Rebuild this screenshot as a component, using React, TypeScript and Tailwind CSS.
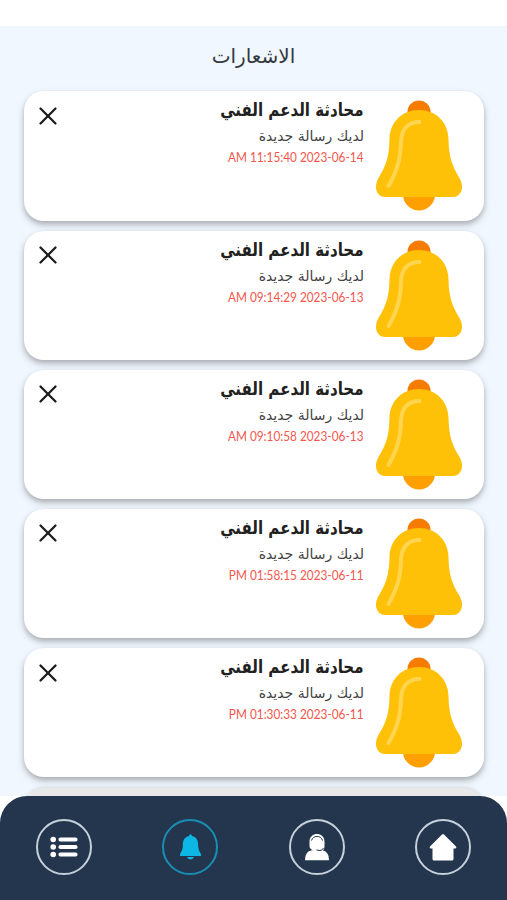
import React from 'react';
import { X } from 'lucide-react';

interface Notification {
  id: number;
  title: string;
  message: string;
  date: string;
}

const title = 'محادثة الدعم الفني';
const message = 'لديك رسالة جديدة';

const notifications: Notification[] = [
  { id: 1, title, message, date: 'AM 11:15:40 2023-06-14' },
  { id: 2, title, message, date: 'AM 09:14:29 2023-06-13' },
  { id: 3, title, message, date: 'AM 09:10:58 2023-06-13' },
  { id: 4, title, message, date: 'PM 01:58:15 2023-06-11' },
  { id: 5, title, message, date: 'PM 01:30:33 2023-06-11' },
];

function BigBell() {
  return (
    <svg width="88" height="111" viewBox="0 0 88 111" className="shrink-0">
      <circle cx="44" cy="12" r="11.5" fill="#f57c00" />
      <circle cx="44" cy="94.5" r="16" fill="#ffa000" />
      <path
        d="M44 10C27 10 15 22 14.5 39C14.3 56 11 66 3.500 78C-2 87.500 2 97 10 97H78C86 97 90 87.500 84.500 78C77 66 73.700 56 73.500 39C73 22 61 10 44 10Z"
        fill="#ffc107"
      />
      <path
        d="M44.500 22C33 22 26.500 29 26 42C25.500 60 22 71 13.500 86"
        fill="none"
        stroke="#ffd54f"
        strokeWidth="4"
        strokeLinecap="round"
      />
    </svg>
  );
}

function NotificationCard({ item }: { item: Notification }) {
  return (
    <div className="flex h-[129.3px] shrink-0 rounded-[20px] bg-white pr-[21px] pl-[16px] shadow-[0_3px_5px_rgba(0,0,0,0.2),0_4px_10px_rgba(0,0,0,0.13)]">
      <div className="pt-[9px]">
        <BigBell />
      </div>
      <div className="flex flex-1 flex-col items-start pr-[11px] pt-[5px]">
        <h2 className="h-[29px] origin-right scale-x-[0.836] whitespace-nowrap text-[18px] font-bold leading-[28px] text-[#212121]">
          {item.title}
        </h2>
        <p className="h-[23px] whitespace-nowrap text-[14px] leading-[23px] text-[#424242]">{item.message}</p>
        <p
          dir="ltr"
          className="h-[19px] origin-right scale-x-[0.945] whitespace-nowrap font-[Lato] text-[12.5px] leading-[20px] text-[#f4574d]"
        >
          {item.date}
        </p>
      </div>
      <button className="mt-[16px] flex h-[17px] w-[16px] items-center justify-center">
        <X size={30} strokeWidth={1.8} className="shrink-0 text-[#1c1c1c]" />
      </button>
    </div>
  );
}

function HomeIcon() {
  return (
    <svg width="28" height="28" viewBox="0 0 28 28" fill="white">
      <path d="M13 1.500Q14 .5 15 1.500L27 13.500Q28 15 26.500 15.500H24.500V26Q24.500 27.500 23 27.500H5Q3.500 27.500 3.500 26V15.500H1.500Q0 15 1 13.500Z" />
    </svg>
  );
}

function SupportIcon() {
  return (
    <svg width="28" height="28" viewBox="0 0 28 28">
      <path d="M2 27.300Q1.500 18.500 9 17.200H19Q26.500 18.500 26 27.300Z" fill="white" />
      <path d="M6.500 13V8.500C6.500 -1.500 21.500 -1.500 21.500 8.500V13Q21.500 16 20 17.500L14 20L8.500 16.500Q6.500 16 6.500 13Z" fill="white" />
      <path
        d="M8.500 7.500C10 2 18 2 19.500 7.500M20.500 15Q19 18.500 13.500 17"
        fill="none"
        stroke="#24364d"
        strokeWidth="1"
      />
    </svg>
  );
}

function BellIcon() {
  return (
    <svg width="23" height="28" viewBox="0 0 24 28" fill="#0cb7e5">
      <path d="M12 .8Q13.500 .8 13.500 2.500C18 3.300 20 7 20 12C20 17 21.500 19 22.500 20.500Q24 23.500 21.500 23.500H2.500Q0 23.500 1.500 20.500C2.500 19 4 17 4 12C4 7 6 3.300 10.500 2.500Q10.500 .8 12 .8Z" />
      <path d="M8.500 24.500H15.500Q15 27 12 27T8.500 24.500Z" />
    </svg>
  );
}

function ListIcon() {
  return (
    <svg width="28" height="22" viewBox="0 0 28 22" fill="white">
      {[3.5, 11, 18.5].map((y) => (
        <g key={y}>
          <circle cx="3.200" cy={y} r="2.800" />
          <rect x="8.500" y={y - 2} width="19" height="4" rx="1.800" />
        </g>
      ))}
    </svg>
  );
}

const navItems = [
  { id: 'home', icon: <HomeIcon />, active: false },
  { id: 'support', icon: <SupportIcon />, active: false },
  { id: 'notifications', icon: <BellIcon />, active: true },
  { id: 'menu', icon: <ListIcon />, active: false },
];

export default function App() {
  return (
    <div
      dir="rtl"
      className="flex h-[900px] w-[507px] flex-col overflow-hidden bg-white pt-[26px] font-['DejaVu_Sans',sans-serif]"
    >
      <main className="flex h-[770px] shrink-0 flex-col overflow-hidden bg-[#f1f7fe]">
        <h1 className="h-[65.4px] shrink-0 text-center text-[20px] leading-[60px] text-[#333a42]">الاشعارات</h1>
        <div className="flex flex-col gap-[9.9px] pr-[23px] pl-[24px]">
          {notifications.map((item) => (
            <NotificationCard key={item.id} item={item} />
          ))}
          <div className="mt-px h-[129px] shrink-0 rounded-[20px] bg-[#e8e8e9] shadow-[0_0_4px_rgba(0,0,0,0.16)]" />
        </div>
      </main>
      <nav className="flex h-[104px] shrink-0 items-start justify-between rounded-t-[27px] bg-[#24364d] pr-[36px] pl-[36px] pt-[23px]">
        {navItems.map((item) => (
          <button
            key={item.id}
            className={`flex h-[56px] w-[56px] items-center justify-center rounded-full border-2 ${
              item.active ? 'border-[#198eb4]' : 'border-[#c5d0da]'
            }`}
          >
            {item.icon}
          </button>
        ))}
      </nav>
    </div>
  );
}
